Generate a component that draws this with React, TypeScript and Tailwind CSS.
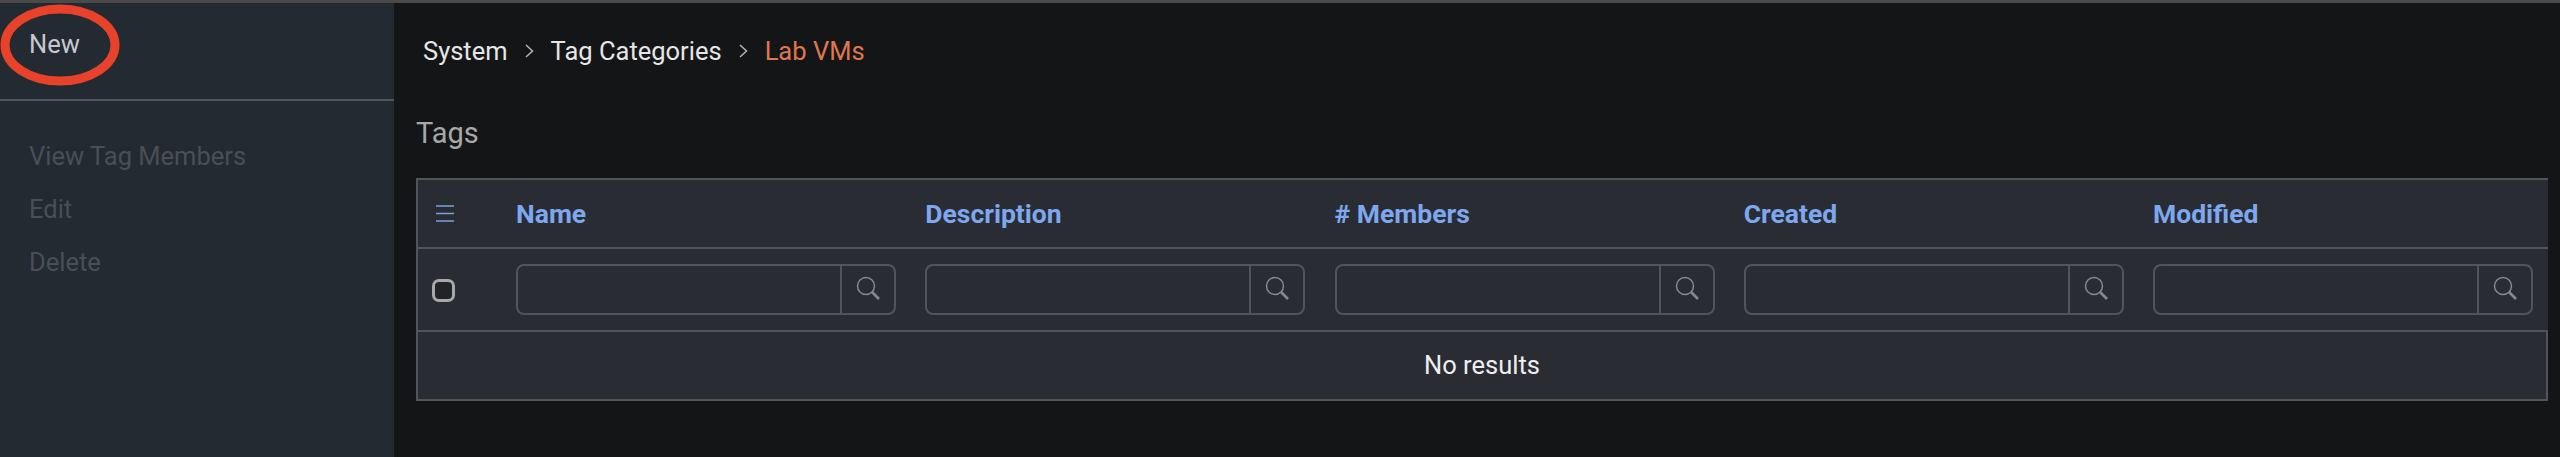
const columns = ['Name', 'Description', '# Members', 'Created', 'Modified'];

function SearchIcon() {
  return (
    <svg width="24" height="24" viewBox="0 0 24 24" fill="none" className="text-[#85898d]">
      <circle cx="10" cy="10" r="8.5" stroke="currentColor" strokeWidth="1.5" />
      <path d="M16 16l7 7" stroke="currentColor" strokeWidth="2.6" />
    </svg>
  );
}

function FilterInput() {
  return (
    <div className="flex h-[51px] w-[380px] rounded-lg border-2 border-[#50555a]">
      <div className="flex-1 border-r-2 border-[#50555a]" />
      <div className="flex w-[52px] items-center justify-center pb-1">
        <SearchIcon />
      </div>
    </div>
  );
}

function Sidebar() {
  return (
    <aside className="relative w-[394px] shrink-0 bg-[#232a31] text-[25.5px]">
      <div className="flex h-[98px] border-b-2 border-[#4f565c] pl-[29px] pt-[22px] leading-[38px] text-[#c5c9ce]">
        New
      </div>
      <ul className="flex flex-col gap-[15px] pl-[29px] pt-[36px] leading-[38px] text-[#494f55]">
        <li>View Tag Members</li>
        <li>Edit</li>
        <li>Delete</li>
      </ul>
      {/* red hand-drawn ring on the New button */}
      <svg width="122" height="84" viewBox="0 0 122 84" fill="none" className="absolute left-0 top-0">
        <ellipse cx="60" cy="42" rx="55" ry="36" stroke="#e8432a" strokeWidth="9" />
      </svg>
    </aside>
  );
}

function TagsTable() {
  return (
    <div className="mr-3 bg-[#292d33] text-[26.5px]">
      <div className="flex h-[71px] items-center overflow-hidden border-l-2 border-t-2 border-b-2 border-[#50555a]">
        <div className="flex w-[98px] shrink-0 pl-[18px]">
          <svg width="18" height="17" viewBox="0 0 18 17" fill="none" className="text-[#7c9fe0]">
            <path d="M0 1h18M0 8.5h18M0 16h18" stroke="currentColor" strokeWidth="1.6" />
          </svg>
        </div>
        {columns.map((c) => (
          <div key={c} className="w-[409.25px] shrink-0 font-bold text-[#7da7f0]">
            {c}
          </div>
        ))}
      </div>
      <div className="flex h-[81px] items-center overflow-hidden border-l-2 border-[#50555a]">
        <div className="flex w-[98px] shrink-0 pl-[14px] pt-[2px]">
          <div className="h-[23px] w-[23px] rounded-[7px] border-[3px] border-[#a8a8a8] bg-[#222326]" />
        </div>
        {columns.map((c) => (
          <div key={c} className="w-[409.25px] shrink-0">
            <FilterInput />
          </div>
        ))}
      </div>
      <div className="flex h-[71px] items-center justify-center border-2 border-[#50555a] text-[25.5px] text-[#eeeeee]">
        No results
      </div>
    </div>
  );
}

export default function App() {
  return (
    <div className="flex h-[457px] flex-col bg-[#141516] font-['Roboto',sans-serif]">
      <div className="h-[3px] shrink-0 bg-[#4a4a4a]" />
      <div className="flex flex-1">
        <Sidebar />
        <main className="min-w-0 flex-1 pl-[22px]">
          <nav className="flex items-center pl-[7px] pt-[29px] text-[25.5px] leading-[38px] text-[#e6e6e6]">
            <span>System</span>
            <svg width="9" height="14" viewBox="0 0 9 14" fill="none" className="mx-[17px] text-[#b5b5b5]">
              <path d="M1 1l6.5 6L1 13" stroke="currentColor" strokeWidth="1.5" />
            </svg>
            <span>Tag Categories</span>
            <svg width="9" height="14" viewBox="0 0 9 14" fill="none" className="mx-[17px] text-[#b5b5b5]">
              <path d="M1 1l6.5 6L1 13" stroke="currentColor" strokeWidth="1.5" />
            </svg>
            <span className="text-[#e07650]">Lab VMs</span>
          </nav>
          <h2 className="mb-[25px] mt-[43px] text-[29px] leading-[40px] text-[#a8a8a8]">Tags</h2>
          <TagsTable />
        </main>
      </div>
    </div>
  );
}
